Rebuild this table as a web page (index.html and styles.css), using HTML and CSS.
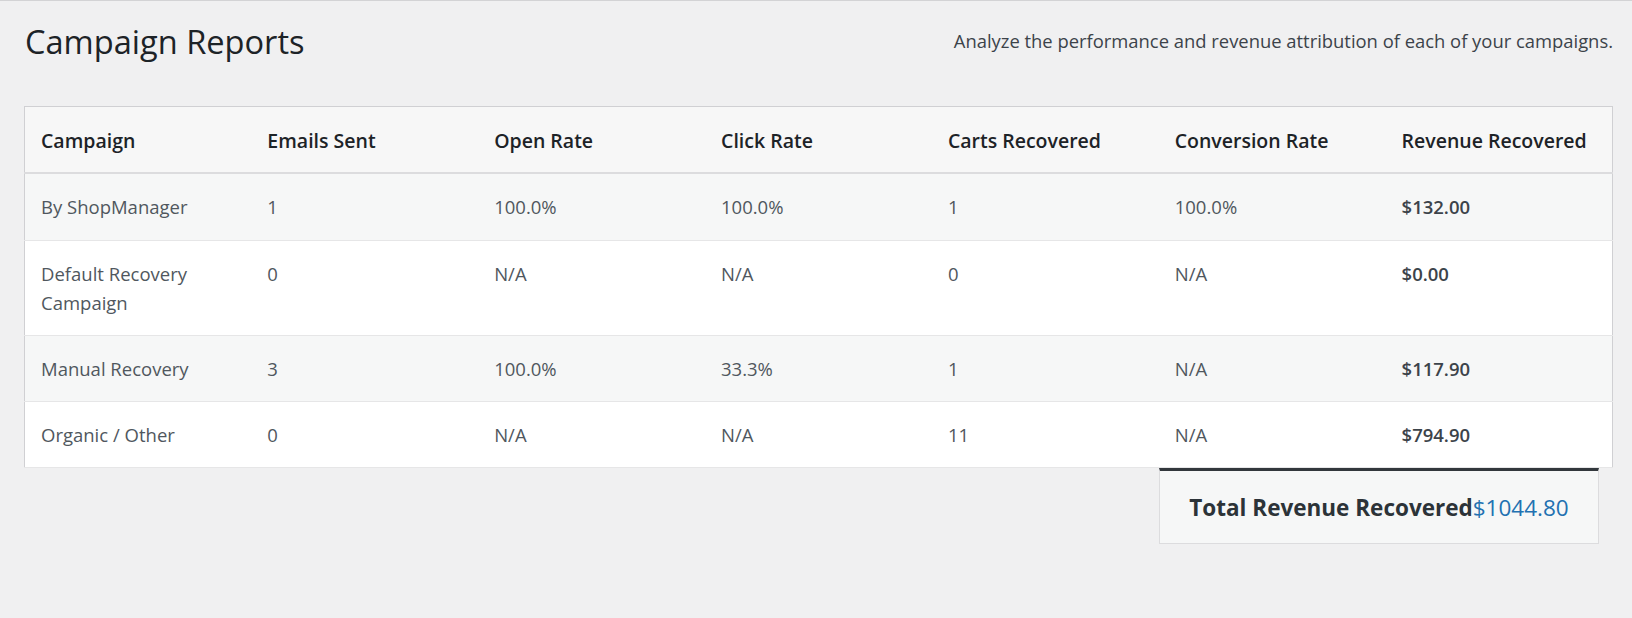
FILE: index.html
```html
<!DOCTYPE html>
<html lang="en">
<head>
<meta charset="utf-8">
<title>Campaign Reports</title>
<link rel="stylesheet" href="styles.css">
</head>
<body>
<div class="wrap">
  <div class="page-head">
    <h1 class="page-title">Campaign Reports</h1>
    <p class="page-desc">Analyze the performance and revenue attribution of each of your campaigns.</p>
  </div>

  <table class="report">
    <thead>
      <tr>
        <th>Campaign</th>
        <th>Emails Sent</th>
        <th>Open Rate</th>
        <th>Click Rate</th>
        <th>Carts Recovered</th>
        <th>Conversion Rate</th>
        <th>Revenue Recovered</th>
      </tr>
    </thead>
    <tbody>
      <tr class="alt">
        <td>By ShopManager</td>
        <td>1</td>
        <td>100.0%</td>
        <td>100.0%</td>
        <td>1</td>
        <td>100.0%</td>
        <td class="money">$132.00</td>
      </tr>
      <tr>
        <td>Default Recovery<br>Campaign</td>
        <td>0</td>
        <td>N/A</td>
        <td>N/A</td>
        <td>0</td>
        <td>N/A</td>
        <td class="money">$0.00</td>
      </tr>
      <tr class="alt">
        <td>Manual Recovery</td>
        <td>3</td>
        <td>100.0%</td>
        <td>33.3%</td>
        <td>1</td>
        <td>N/A</td>
        <td class="money">$117.90</td>
      </tr>
      <tr>
        <td>Organic / Other</td>
        <td>0</td>
        <td>N/A</td>
        <td>N/A</td>
        <td>11</td>
        <td>N/A</td>
        <td class="money">$794.90</td>
      </tr>
    </tbody>
  </table>

  <div class="total-row">
    <div class="total-box">
      <span class="total-label">Total Revenue Recovered</span><span class="total-value">$1044.80</span>
    </div>
  </div>
</div>
</body>
</html>
```

FILE: styles.css
```css
html, body {
  margin: 0;
  padding: 0;
}

body {
  background: #f0f0f1;
  border-top: 1px solid #d3d3d5;
  font-family: "Open Sans", "Noto Sans", "Liberation Sans", sans-serif;
  color: #50575e;
  font-size: 18.5px;
}

.wrap {
  padding: 0 19px 0 24px;
}

.page-head {
  display: flex;
  justify-content: space-between;
  align-items: flex-start;
  padding-top: 19px;
}

.page-title {
  margin: 0 0 0 1px;
  font-size: 32.6px;
  line-height: 44px;
  font-weight: 400;
  color: #1d2327;
}

.page-desc {
  margin: 6px 0 0 0;
  font-size: 18.4px;
  line-height: 29px;
  color: #3c434a;
}

.report {
  margin-top: 42px;
  width: 100%;
  table-layout: fixed;
  border-collapse: collapse;
  border: 1px solid #d0d0d3;
  background: #fff;
}

.report th,
.report td {
  text-align: left;
  padding: 18px 16px;
  line-height: 29.2px;
  vertical-align: top;
}

.report th {
  padding: 19px 16px 17px;
  line-height: 29.4px;
  background: #f7f7f7;
  color: #1d2327;
  font-weight: 600;
  font-size: 19.5px;
  border-bottom: 2px solid #dcdcde;
}

.report td {
  border-bottom: 1px solid #e6e6e7;
}

.report tr.alt td {
  background: #f6f7f7;
}

.report td.money {
  font-weight: 600;
  color: #3c434a;
}

.total-row {
  display: flex;
  justify-content: flex-end;
  padding-right: 14px;
}

.total-box {
  width: 438px;
  height: 72px;
  display: flex;
  align-items: center;
  justify-content: center;
  background: #f6f7f7;
  border: 1px solid #dcdcde;
  border-top: 3px solid #32373c;
  font-size: 22.5px;
}

.total-label {
  font-weight: 700;
  color: #2c3338;
}

.total-value {
  color: #2271b1;
}
```
